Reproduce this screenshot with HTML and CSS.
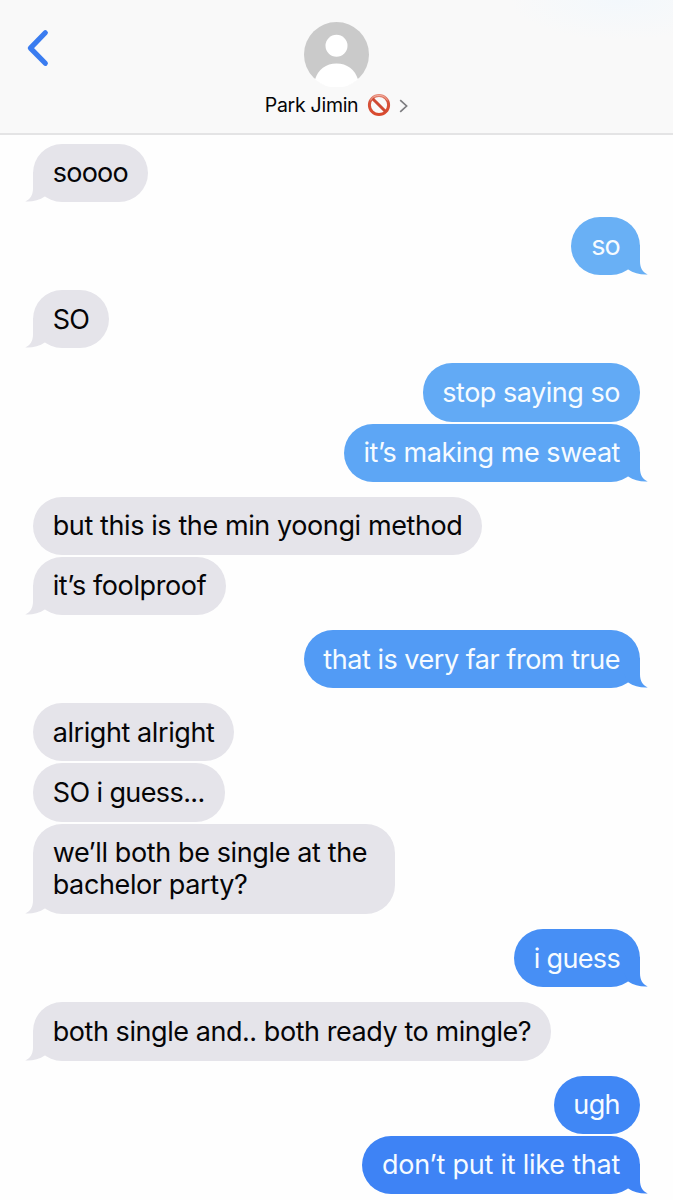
FILE: index.html
```html
<!DOCTYPE html>
<html lang="en">
<head>
<meta charset="utf-8">
<title>Park Jimin</title>
<link rel="stylesheet" href="styles.css">
</head>
<body>
<svg class="defs" width="0" height="0" aria-hidden="true">
  <symbol id="tail" viewBox="0 0 24 30">
    <path d="M16 0V16.5C16 23 19 27.4 23.7 29.5C17 29.9 9.5 28.4 4.2 24.6L0 16V0Z"/>
  </symbol>
</svg>
<header class="header">
  <svg class="back" viewBox="0 0 24 38"><path d="M19.3 3.8L4.4 19.1L19.3 34.3"/></svg>
  <div class="contact">
    <svg class="avatar" viewBox="0 0 65 65">
      <circle cx="32.5" cy="32.5" r="32.5" fill="#cacaca"/>
      <circle cx="32.5" cy="23.8" r="11" fill="#fff"/>
      <path d="M11 57.4C14 47.5 22 41.4 32.5 41.4S51 47.5 54 57.4A32.5 32.5 0 0 1 11 57.4Z" fill="#fff"/>
    </svg>
    <div class="name-row">
      <span class="name">Park Jimin</span>
      <svg class="ban" viewBox="0 0 24 24">
        <defs><linearGradient id="red" x1="0" y1="0" x2="0" y2="1"><stop offset="0" stop-color="#e58573"/><stop offset=".3" stop-color="#d6543d"/><stop offset="1" stop-color="#d94a2e"/></linearGradient></defs>
        <circle cx="12" cy="12" r="9.6" fill="none" stroke="url(#red)" stroke-width="3"/>
        <path d="M5.2 5.2L18.8 18.8" stroke="#cf4932" stroke-width="3"/>
        <path d="M3.5 7.4A9.7 9.7 0 0 1 20.5 7.4" fill="none" stroke="#f3b9ab" stroke-width=".8"/>
      </svg>
      <svg class="more" viewBox="0 0 9 14"><path d="M1.2 1.1L7.6 7L1.2 12.9"/></svg>
    </div>
  </div>
</header>
<main class="thread">
  <section class="group received">
    <p class="bubble last m1">soooo<svg class="tail"><use href="#tail"/></svg></p>
  </section>
  <section class="group sent">
    <p class="bubble last m2">so<svg class="tail"><use href="#tail"/></svg></p>
  </section>
  <section class="group received">
    <p class="bubble last m3">SO<svg class="tail"><use href="#tail"/></svg></p>
  </section>
  <section class="group sent">
    <p class="bubble m4">stop saying so</p>
    <p class="bubble last m5">it’s making me sweat<svg class="tail"><use href="#tail"/></svg></p>
  </section>
  <section class="group received">
    <p class="bubble m6">but this is the min yoongi method</p>
    <p class="bubble last m7">it’s foolproof<svg class="tail"><use href="#tail"/></svg></p>
  </section>
  <section class="group sent">
    <p class="bubble last m8">that is very far from true<svg class="tail"><use href="#tail"/></svg></p>
  </section>
  <section class="group received">
    <p class="bubble m9">alright alright</p>
    <p class="bubble m10">SO i guess...</p>
    <p class="bubble last m11">we’ll both be single at the<br>bachelor party?<svg class="tail"><use href="#tail"/></svg></p>
  </section>
  <section class="group sent">
    <p class="bubble last m12">i guess<svg class="tail"><use href="#tail"/></svg></p>
  </section>
  <section class="group received">
    <p class="bubble last m13">both single and.. both ready to mingle?<svg class="tail"><use href="#tail"/></svg></p>
  </section>
  <section class="group sent">
    <p class="bubble m14">ugh</p>
    <p class="bubble last m15">don’t put it like that<svg class="tail"><use href="#tail"/></svg></p>
  </section>
</main>
</body>
</html>
```
FILE: styles.css
```css
* { box-sizing: border-box; }
body {
  margin: 0;
  height: 1200px;
  overflow: hidden;
  background: #fefefe;
  font-family: Inter, "Liberation Sans", sans-serif;
  color: #050507;
}
.defs { position: absolute; }
.header {
  display: grid;
  grid-template-columns: 80px 1fr 80px;
  height: 135px;
  border-bottom: 2px solid #e4e4e5;
  background: radial-gradient(ellipse 110px 40px at 620px 0, #f3f8fc, #f9f9f9);
}
.back { width: 24px; height: 38px; margin: 28.5px 0 0 26px; }
.back path { fill: none; stroke: #3a7cf0; stroke-width: 5.2; stroke-linecap: round; stroke-linejoin: round; }
.contact { display: flex; flex-direction: column; align-items: center; padding-top: 21.5px; }
.avatar { width: 65px; height: 65px; }
.name-row { display: flex; align-items: center; height: 24px; margin-top: 6.5px; }
.name { width: 93px; font-size: 19.5px; line-height: 24px; letter-spacing: -.28px; white-space: nowrap; }
.ban { width: 24px; height: 24px; margin-left: 9px; }
.more { width: 9px; height: 14px; margin: 1px 0 0 8.5px; }
.more path { fill: none; stroke: #7d7d80; stroke-width: 1.7; }
.thread { display: flex; flex-direction: column; gap: 15px; padding: 8.8px 33px 0; }
.group { display: flex; flex-direction: column; gap: 2px; }
.received { align-items: flex-start; --fill: #e5e4ea; }
.sent { align-items: flex-end; color: #f6fbff; }
.bubble {
  position: relative;
  margin: 0;
  padding: 13.4px 20px 12.4px 19.7px;
  border-radius: 29.1px;
  background: var(--fill);
  font-size: 27px;
  line-height: 32.4px;
  white-space: nowrap;
}
.tail { position: absolute; right: -8px; bottom: 0; width: 24px; height: 30px; fill: var(--fill); }
.received .tail { right: auto; left: -8px; transform: scaleX(-1); }
.m1 { letter-spacing: -.75px; }
.m2 { --fill: #69b0f5; letter-spacing: -.8px; }
.m3 { letter-spacing: -.8px; }
.m4 { --fill: #62aaf5; letter-spacing: -.48px; }
.m5 { --fill: #5da6f5; letter-spacing: -.44px; }
.m6 { letter-spacing: -.4px; }
.m7 { letter-spacing: -.38px; }
.m8 { --fill: #529bf5; letter-spacing: -.47px; }
.m9 { letter-spacing: -.42px; }
.m10 { letter-spacing: -.6px; }
.m11 { width: 361.5px; letter-spacing: -.38px; }
.m12 { --fill: #478ff5; letter-spacing: -.68px; }
.m13 { letter-spacing: -.44px; }
.m14 { --fill: #4087f5; letter-spacing: -.6px; }
.m15 { --fill: #3e83f5; letter-spacing: -.24px; }
```
